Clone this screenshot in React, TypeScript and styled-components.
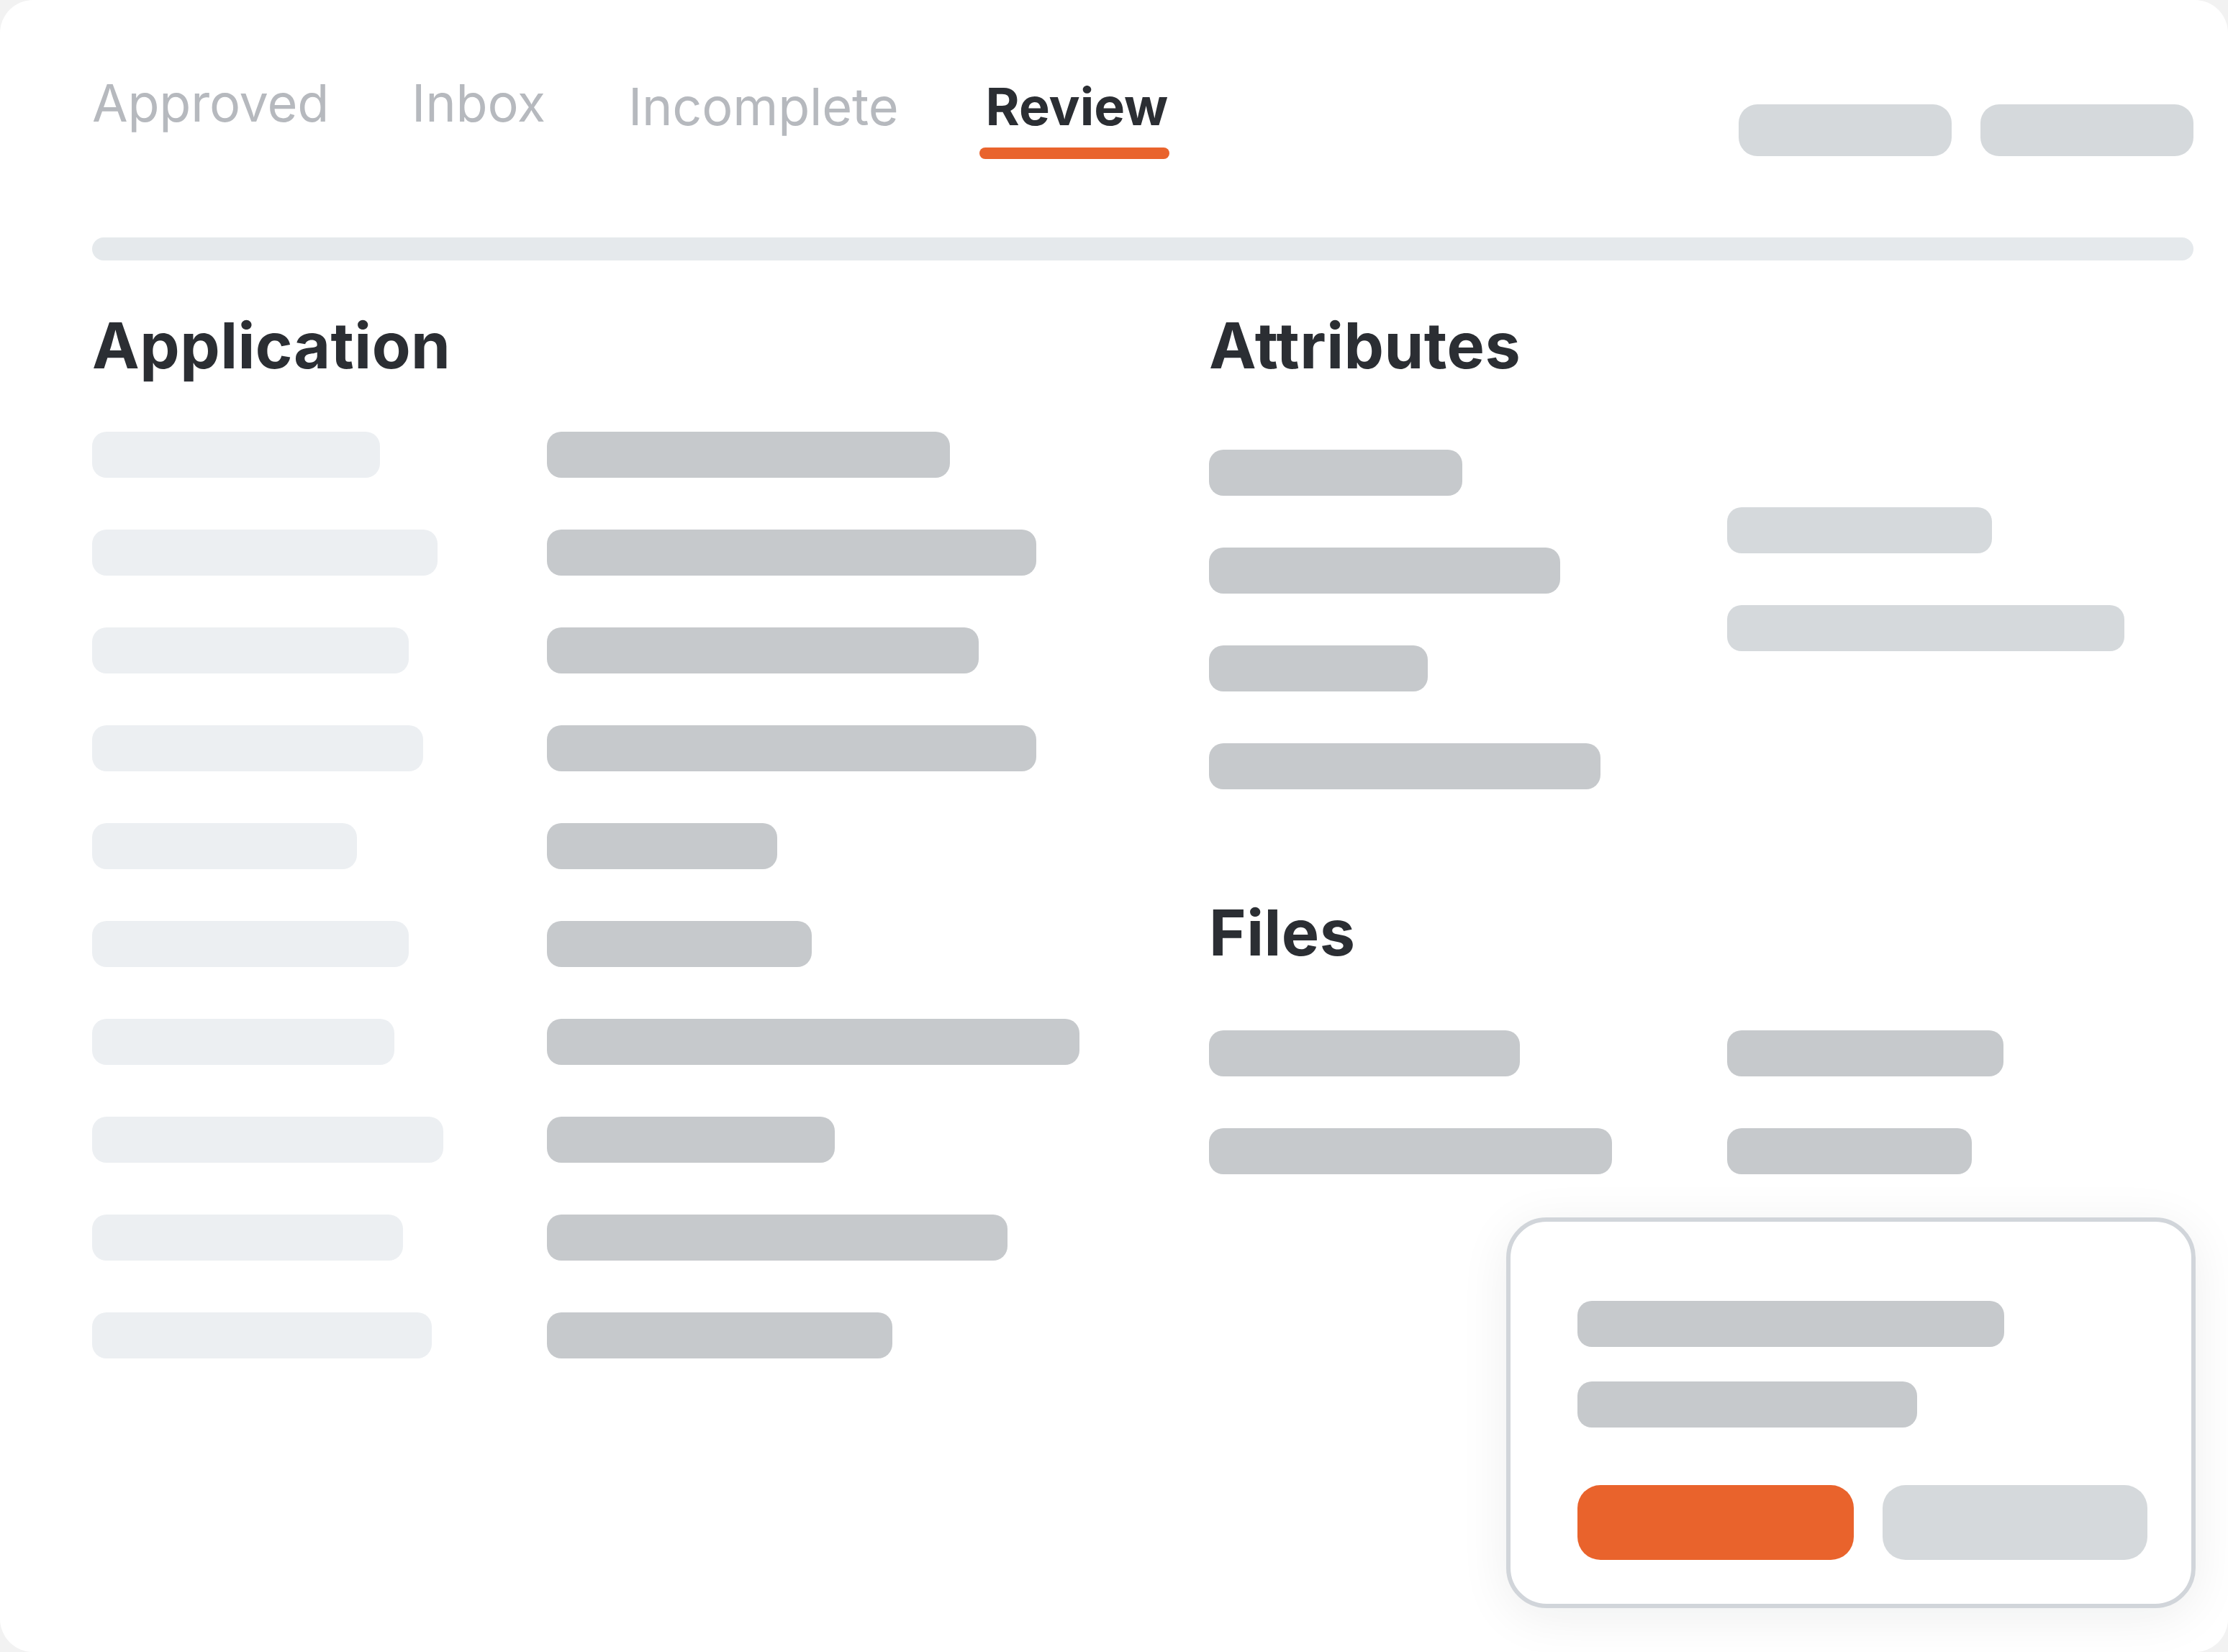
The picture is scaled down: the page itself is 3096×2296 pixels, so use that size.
import React from 'react';
import styled, { createGlobalStyle } from 'styled-components';

const GlobalStyle = createGlobalStyle`
  html, body {
    margin: 0;
    padding: 0;
    background: #f2f2f2;
  }
  * {
    box-sizing: border-box;
  }
`;

type Tone = 'faint' | 'mid' | 'dark';

const toneColor: Record<Tone, string> = {
  faint: '#eceff2',
  mid: '#d5d9dc',
  dark: '#c6c9cc',
};

const Card = styled.div`
  position: relative;
  width: 3096px;
  height: 2296px;
  padding: 107px 48px 0 128px;
  background: #ffffff;
  border-radius: 46px;
  overflow: hidden;
  font-family: Inter, 'Noto Sans', sans-serif;
  display: flex;
  flex-direction: column;
`;

const Header = styled.header`
  display: flex;
  justify-content: space-between;
  align-items: flex-start;
`;

const Tabs = styled.nav`
  display: flex;
  align-items: flex-start;
  gap: 115px;
`;

const Tab = styled.div<{ $drop?: boolean; $active?: boolean }>`
  display: flex;
  flex-direction: column;
  padding-top: ${p => (p.$drop ? '5px' : '0')};
  margin-left: ${p => (p.$active ? '6px' : '0')};
`;

const TabLabel = styled.span<{ $active?: boolean }>`
  font-size: 72px;
  line-height: 72px;
  font-weight: ${p => (p.$active ? 700 : 400)};
  color: ${p => (p.$active ? '#2b2e33' : '#b6b9be')};
  letter-spacing: ${p => (p.$active ? '0' : '-0.2px')};
  white-space: nowrap;
`;

const TabUnderline = styled.div`
  height: 16px;
  margin-top: 21px;
  margin-left: -8px;
  margin-right: -2px;
  border-radius: 8px;
  background: #e9632c;
`;

const Actions = styled.div`
  display: flex;
  gap: 40px;
  margin-top: 38px;
`;

const GhostButton = styled.div`
  width: 296px;
  height: 72px;
  border-radius: 26px;
  background: #d5d9dc;
`;

const Track = styled.div`
  height: 32px;
  margin-top: 109px;
  border-radius: 16px;
  background: #e5e9ec;
`;

const Body = styled.main`
  display: grid;
  grid-template-columns: 1552px 1fr;
  margin-top: 74px;
`;

const Section = styled.section<{ $gapTop?: number }>`
  display: flex;
  flex-direction: column;
  margin-top: ${p => p.$gapTop ?? 0}px;
`;

const Heading = styled.h2<{ $space: number }>`
  margin: 0 0 ${p => p.$space}px;
  font-size: 88px;
  line-height: 88px;
  font-weight: 700;
  color: #2b2e33;
  letter-spacing: 0.5px;
`;

const FieldGrid = styled.div<{ $col: number }>`
  display: grid;
  grid-template-columns: ${p => p.$col}px 1fr;
  row-gap: 72px;
  align-items: start;
`;

const Stack = styled.div<{ $offset?: number }>`
  display: flex;
  flex-direction: column;
  align-items: flex-start;
  gap: 72px;
  margin-top: ${p => p.$offset ?? 0}px;
`;

const Split = styled.div`
  display: grid;
  grid-template-columns: 720px 1fr;
  align-items: start;
`;

const Bar = styled.div<{ $w: number; $tone: Tone }>`
  width: ${p => p.$w}px;
  height: 64px;
  border-radius: 20px;
  background: ${p => toneColor[p.$tone]};
`;

const Popup = styled.div`
  position: absolute;
  right: 45px;
  bottom: 61px;
  width: 958px;
  padding: 110px 61px 61px 93px;
  border: 6px solid #d1d5da;
  border-radius: 56px;
  background: #ffffff;
  box-shadow: 0 12px 70px rgba(20, 24, 32, 0.07);
  display: flex;
  flex-direction: column;
  align-items: flex-start;
`;

const PopupLines = styled.div`
  display: flex;
  flex-direction: column;
  gap: 48px;
`;

const PopupActions = styled.div`
  display: flex;
  gap: 40px;
  margin-top: 80px;
`;

const PopupButton = styled.div<{ $primary?: boolean; $w: number }>`
  width: ${p => p.$w}px;
  height: 104px;
  border-radius: 32px;
  background: ${p => (p.$primary ? '#e9632c' : '#d5d9dc')};
`;

const tabs = [
  { label: 'Approved' },
  { label: 'Inbox' },
  { label: 'Incomplete', drop: true },
  { label: 'Review', drop: true, active: true },
];

const applicationRows: [number, number][] = [
  [400, 560],
  [480, 680],
  [440, 600],
  [460, 680],
  [368, 320],
  [440, 368],
  [420, 740],
  [488, 400],
  [432, 640],
  [472, 480],
];

const attributesLeft = [352, 488, 304, 544];
const attributesRight = [368, 552];

const fileRows: [number, number][] = [
  [432, 384],
  [560, 340],
];

const App = () => {
  return (
    <>
      <GlobalStyle />
      <Card>
        <Header>
          <Tabs>
            {tabs.map(t => (
              <Tab key={t.label} $drop={t.drop} $active={t.active}>
                <TabLabel $active={t.active}>{t.label}</TabLabel>
                {t.active && <TabUnderline />}
              </Tab>
            ))}
          </Tabs>
          <Actions>
            <GhostButton />
            <GhostButton />
          </Actions>
        </Header>

        <Track />

        <Body>
          <Section>
            <Heading $space={76}>Application</Heading>
            <FieldGrid $col={632}>
              {applicationRows.map(([label, value], i) => (
                <React.Fragment key={i}>
                  <Bar $w={label} $tone="faint" />
                  <Bar $w={value} $tone="dark" />
                </React.Fragment>
              ))}
            </FieldGrid>
          </Section>

          <div>
            <Section>
              <Heading $space={101}>Attributes</Heading>
              <Split>
                <Stack>
                  {attributesLeft.map((w, i) => (
                    <Bar key={i} $w={w} $tone="dark" />
                  ))}
                </Stack>
                <Stack $offset={80}>
                  {attributesRight.map((w, i) => (
                    <Bar key={i} $w={w} $tone="mid" />
                  ))}
                </Stack>
              </Split>
            </Section>

            <Section $gapTop={155}>
              <Heading $space={92}>Files</Heading>
              <FieldGrid $col={720}>
                {fileRows.map(([a, b], i) => (
                  <React.Fragment key={i}>
                    <Bar $w={a} $tone="dark" />
                    <Bar $w={b} $tone="dark" />
                  </React.Fragment>
                ))}
              </FieldGrid>
            </Section>
          </div>
        </Body>

        <Popup>
          <PopupLines>
            <Bar $w={593} $tone="dark" />
            <Bar $w={472} $tone="dark" />
          </PopupLines>
          <PopupActions>
            <PopupButton $primary $w={384} />
            <PopupButton $w={368} />
          </PopupActions>
        </Popup>
      </Card>
    </>
  );
};

export default App;
